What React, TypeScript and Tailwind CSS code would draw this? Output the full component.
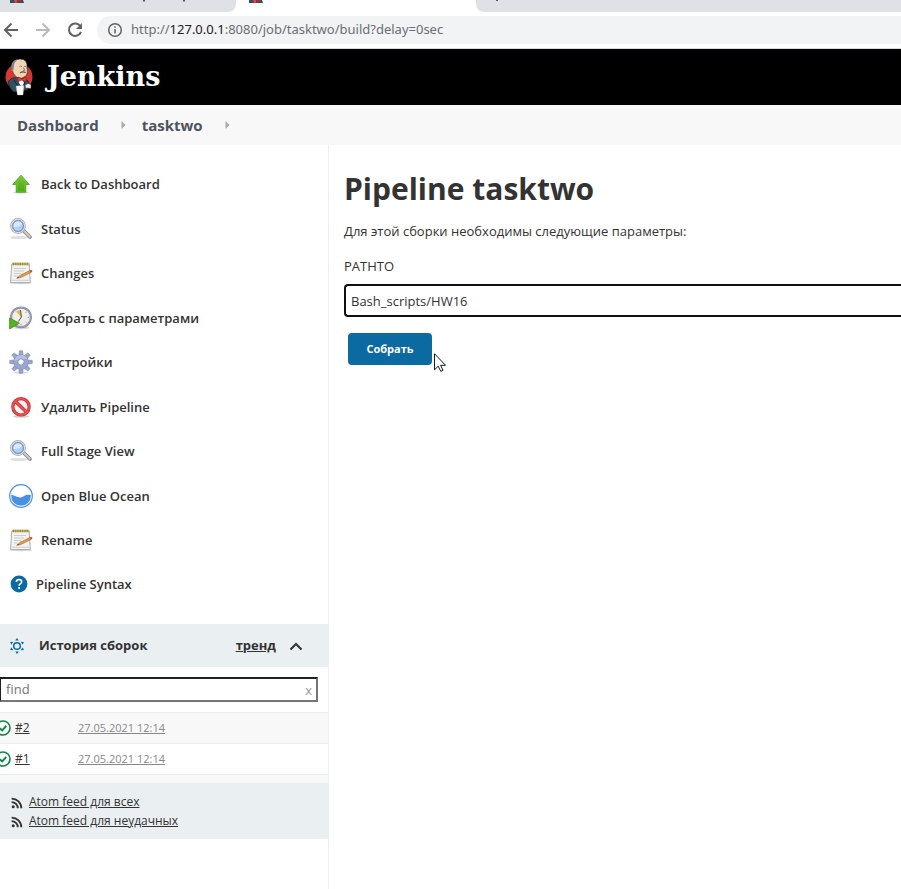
import type { ReactNode } from "react";

type IconProps = { className?: string };

function Butler({ className }: IconProps) {
  return (
    <svg viewBox="0 0 28 38" className={className} aria-hidden="true">
      <ellipse cx="14" cy="19" rx="13.5" ry="13.5" fill="#d33833" />
      <path d="M3 24 Q7 18.5 12 20 L20 21 Q24 22 24 27 L22 32 L9 34 Q5 32 3 24Z" fill="#335061" stroke="#172026" strokeWidth="0.8" />
      <path d="M7 11 Q6 1 15 1 Q23 1 22 10 Q23.5 16 20 18.5 Q17 21.5 12 19.5 Q7.5 16 7 11Z" fill="#f0d6b7" stroke="#231f20" strokeWidth="0.6" />
      <path d="M6.5 13 Q4.5 2.5 13 1.2 Q8.6 4.5 9 8.5 L8.2 13Z" fill="#8a8682" />
      <path d="M14.5 8.6 Q15.5 7.6 17 8.6 M19 8.6 Q20 7.8 21 8.8 M18.4 9.5 L19.8 12.4 L18 12.6" fill="none" stroke="#6b564a" strokeWidth="0.7" />
      <path d="M15 14.8 Q18 13 20.6 14.8" fill="none" stroke="#5c5048" strokeWidth="1.3" />
      <path d="M12.6 20.5 L17 21 L19 25 L17 29 L14 25Z" fill="#fff" />
      <path d="M13 19 L17 21 L21 19 L21 23.6 L17 22 L13 23.6Z" fill="#ef3d3a" stroke="#811c18" strokeWidth="0.6" />
      <path d="M9 22 L14 30 M20 24 L18 29" stroke="#172026" />
      <path d="M11 28 L19 27.5 L18 37 L12.4 37Z" fill="#fff" stroke="#999" strokeWidth="0.4" />
      <path d="M20 27 L23 25.6 L26 26.4 L26 30.6 L20.6 30Z" fill="#eee" stroke="#333" strokeWidth="0.5" />
    </svg>
  );
}

function UpArrow() {
  return (
    <svg viewBox="0 0 24 24" className="size-6">
      <defs>
        <linearGradient id="up" x1="0" y1="0" x2="0" y2="1">
          <stop offset="0" stopColor="#7acb32" />
          <stop offset="1" stopColor="#46a80c" />
        </linearGradient>
      </defs>
      <ellipse cx="12" cy="20.5" rx="8" ry="1.2" fill="#bbb" opacity="0.6" />
      <path d="M12 3.2 L20.3 12.5 H16.8 V20.2 H7.2 V12.5 H3.7Z" fill="url(#up)" stroke="#4a9c25" strokeWidth="0.8" />
      <path d="M12 4.8 L18 11.6 H15.8 V19.2 H8.2 V11.6 H6Z" fill="none" stroke="#8dd450" strokeWidth="0.4" />
    </svg>
  );
}

function Magnifier() {
  return (
    <svg viewBox="0 0 24 24" className="size-6">
      <ellipse cx="10" cy="20.5" rx="9" ry="1.6" fill="#ccc" opacity="0.6" />
      <path d="M14.5 13.5 L21 20" stroke="#888" strokeWidth="3.8" strokeLinecap="round" />
      <path d="M15 14 L20.8 19.8" stroke="#ccc" strokeWidth="2" strokeLinecap="round" />
      <circle cx="9" cy="9" r="7" fill="#a9c9ee" stroke="#aaa" strokeWidth="1.8" />
      <circle cx="9" cy="9" r="6.7" fill="none" stroke="#e6e6e6" strokeWidth="0.9" />
      <circle cx="9" cy="9" r="5.4" fill="#b4cff1" stroke="#668fc6" strokeWidth="1" />
      <path d="M4.8 10 Q4 4.5 9 4.5 Q12.5 4.5 13 7 Q10 10.5 4.8 10Z" fill="#e4effb" opacity="0.8" />
    </svg>
  );
}

function Notepad() {
  return (
    <svg viewBox="0 0 24 24" className="size-6">
      <ellipse cx="12" cy="22" rx="11" ry="1.2" fill="#bbb" opacity="0.6" />
      <path d="M2.8 3 H20.2 L21.3 21.6 H1.5Z" fill="#f2f2f2" stroke="#a5a5a5" strokeWidth="0.9" />
      <path d="M2.4 19.3 H20.6" stroke="#d0d0d0" />
      <rect x="3" y="1.8" width="17.4" height="2.4" fill="#c3b35a" />
      <path d="M4.5 1.5 V4.2 M6.8 1.5 V4.2 M9.1 1.5 V4.2 M11.4 1.5 V4.2 M13.7 1.5 V4.2 M16 1.5 V4.2 M18.3 1.5 V4.2" stroke="#8a7c35" strokeWidth="0.8" />
      <path d="M5 7.5 H17 M5 10 H15 M5 12.5 H12 M5 15 H9" stroke="#c4c4c4" strokeWidth="0.8" />
      <path d="M7.8 17.3 L11.4 14.2 L20.8 9.6 L22 11.4 L12.3 16.3Z" fill="#e0a04a" stroke="#93652c" strokeWidth="0.6" />
      <path d="M20.5 9.6 L22 9 Q23.8 9.3 23.1 10.9 L21.8 11.6Z" fill="#e03c3c" />
      <path d="M7.8 17.3 L9.4 15.9 L10.1 16.8Z" fill="#3c3022" />
    </svg>
  );
}

function ClockPlay() {
  return (
    <svg viewBox="0 0 24 24" className="size-6">
      <ellipse cx="12.5" cy="21.8" rx="8" ry="1.5" fill="#bbb" opacity="0.6" />
      <circle cx="12" cy="11.3" r="9.9" fill="#eeefea" stroke="#80809c" strokeWidth="2" />
      <circle cx="12" cy="11.3" r="9.9" fill="none" stroke="#b2b2cb" strokeWidth="0.7" />
      <path d="M12 11.3 L7 5.6 Q9.6 3.6 12 4Z" fill="#e5bd4f" />
      <path d="M11.5 4 L12.4 11 L9.4 15.5" fill="none" stroke="#555" strokeWidth="1" />
      <path d="M20 11.3 H18.4 M12 17.8 V19.4 M17.6 5.8 L16.6 6.8 M17.6 16.8 L16.6 15.9" stroke="#999" />
      <path d="M0.6 12 L10.4 17.2 L0.6 23Z" fill="#55b320" stroke="#3c8e10" strokeWidth="0.8" />
    </svg>
  );
}

const TEETH = [0, 45, 90, 135, 180, 225, 270, 315];

function Gear() {
  return (
    <svg viewBox="0 0 24 24" className="size-6">
      <ellipse cx="12" cy="22.5" rx="7" ry="1.2" fill="#bbb" opacity="0.6" />
      <g fill="#9aa6cc" stroke="#7482ab" strokeWidth="0.6">
        {TEETH.map((angle) => (
          <path key={angle} d="M9.9 6 L10.4 0.8 H13.6 L14.1 6Z" transform={`rotate(${angle} 12 12)`} />
        ))}
        <circle cx="12" cy="12" r="7.2" />
      </g>
      <circle cx="12" cy="12" r="6.9" fill="#9ba7ce" />
      <path d="M5.4 11 Q6 5.4 12 5.1 Q17 5.4 18.2 9 Q12 8 5.4 11Z" fill="#b7c0df" />
      <circle cx="12" cy="12" r="3.1" fill="#fff" stroke="#7482ab" strokeWidth="0.7" />
    </svg>
  );
}

function Forbidden() {
  return (
    <svg viewBox="0 0 24 24" className="size-6">
      <ellipse cx="12" cy="21.5" rx="8" ry="1.3" fill="#bbb" opacity="0.7" />
      <circle cx="12" cy="11.8" r="8.2" fill="#f6f2f2" stroke="#c92a2d" strokeWidth="3.2" />
      <path d="M6.2 6.2 L17.8 17.4" stroke="#c92a2d" strokeWidth="3.4" />
      <circle cx="12" cy="11.8" r="8.2" fill="none" stroke="#e75254" strokeWidth="1.8" />
      <path d="M6.2 6.2 L17.8 17.4" stroke="#e75254" strokeWidth="2" />
    </svg>
  );
}

function BlueOcean() {
  return (
    <svg viewBox="0 0 24 24" className="size-6">
      <circle cx="12" cy="12" r="11.3" fill="#fff" stroke="#4a90e2" strokeWidth="1.2" />
      <path d="M2.2 11 C5.5 10.4 7.5 13.6 11.5 13.4 C15.5 13 15.5 9.8 21.8 11 V12 A9.8 9.8 0 0 1 2.2 12Z" fill="#4a90e2" />
    </svg>
  );
}

function Help() {
  return (
    <svg viewBox="0 0 18 18" className="size-[18px]">
      <circle cx="9" cy="9" r="8.4" fill="#0b6aa2" />
      <path d="M6.3 7 Q6.5 4.5 9 4.5 Q11.7 4.6 11.7 6.8 Q11.6 8.3 10 9 Q9.1 9.5 9.1 10.7" fill="none" stroke="#fff" strokeWidth="1.6" />
      <circle cx="9.1" cy="13" r="1.1" fill="#fff" />
    </svg>
  );
}

const RAYS = [0, 60, 120, 180, 240, 300];

function Sun() {
  return (
    <svg viewBox="0 0 16 16" className="size-4">
      <circle cx="8" cy="8" r="3.3" fill="none" stroke="#0b6aa2" strokeWidth="1.5" />
      {RAYS.map((angle) => (
        <path key={angle} d="M8 0 L9.8 2.6 H6.2Z" fill="#0b6aa2" transform={`rotate(${angle} 8 8)`} />
      ))}
    </svg>
  );
}

function Success() {
  return (
    <svg viewBox="0 0 16 16" className="-ml-[5px] size-4 shrink-0">
      <circle cx="8" cy="8" r="7" fill="none" stroke="#138347" strokeWidth="1.6" />
      <path d="M4.8 8.2 L7.2 10.4 L11.2 6" fill="none" stroke="#138347" strokeWidth="1.9" />
    </svg>
  );
}

function Feed() {
  return (
    <svg viewBox="0 0 12 12" className="mt-0.5 size-3 shrink-0" fill="none" stroke="#333" strokeWidth="1.9">
      <path d="M0.6 1.6 A9.6 9.6 0 0 1 10.3 11.3 M0.6 5.1 A6.1 6.1 0 0 1 6.8 11.3" />
      <circle cx="2.2" cy="9.8" r="1.5" fill="#333" stroke="none" />
    </svg>
  );
}

function Favicon() {
  return (
    <svg viewBox="0 0 14 3" className="h-[3px] w-3.5" aria-hidden="true">
      <path d="M0 0 H13 L14 3 H0Z" fill="#335061" />
      <path d="M4 0 H7 V3 H5Z" fill="#ef3d3a" />
      <path d="M8 0 H11 V2 H8Z" fill="#b42c2a" />
    </svg>
  );
}

function BrowserChrome() {
  return (
    <header>
      <div className="flex h-3 overflow-hidden">
        <div className="flex w-[236px] shrink-0 rounded-br-lg bg-[#dee1e6] pl-2.5">
          <Favicon />
          <svg viewBox="0 0 48 2" className="ml-[118px] h-0.5 w-12" aria-hidden="true">
            <path d="M1 0 H3 V1.5 H1Z M41 0 H43 V1.5 H41Z" fill="#555" />
          </svg>
        </div>
        <div className="w-[240px] shrink-0 pl-[13px]">
          <Favicon />
        </div>
        <div className="flex-1 rounded-bl-lg bg-[#dee1e6] pl-5">
          <svg viewBox="0 0 4 2" className="h-0.5 w-1" aria-hidden="true">
            <path d="M0 0 H2 V1 H0Z" fill="#555" />
          </svg>
        </div>
      </div>
      <div className="flex h-[37px] items-center border-b border-[#d5d8dc] pl-[3px]">
        <button type="button" aria-label="Back">
          <svg viewBox="0 0 16 16" className="size-4" fill="none" stroke="#5f6368" strokeWidth="2">
            <path d="M15 8 H2.5 M8.5 1.5 L2 8 L8.5 14.5" />
          </svg>
        </button>
        <button type="button" aria-label="Forward" className="ml-4">
          <svg viewBox="0 0 16 16" className="size-4" fill="none" stroke="#b9bbbe" strokeWidth="2">
            <path d="M1 8 H13.5 M7.5 1.5 L14 8 L7.5 14.5" />
          </svg>
        </button>
        <button type="button" aria-label="Reload" className="ml-4">
          <svg viewBox="0 0 16 16" className="size-4" fill="none" stroke="#5f6368" strokeWidth="2">
            <path d="M13.4 4.3 A6.2 6.2 0 1 0 14 9.8" />
            <path d="M15 1 V7 H9Z" fill="#5f6368" stroke="none" />
          </svg>
        </button>
        <div className="ml-3.5 flex h-7 flex-1 items-center rounded-l-full bg-[#f1f3f4] pl-2.5 font-['Noto_Sans','Open_Sans',sans-serif] text-[13px] text-[#6b6f74]">
          <svg viewBox="0 0 16 16" className="mr-2 size-4" fill="none" stroke="#5f6368" strokeWidth="1.5">
            <circle cx="8" cy="8" r="6.3" />
            <path d="M8 7 V11.5 M8 4.3 V5.8" />
          </svg>
          <span>
            http://<span className="text-[#202124]">127.0.0.1</span>:8080/job/tasktwo/build?delay=0sec
          </span>
        </div>
      </div>
    </header>
  );
}

function CrumbArrow() {
  return (
    <svg viewBox="0 0 5 8" className="h-2 w-[5px]" aria-hidden="true">
      <path d="M0.5 0 L4.5 4 L0.5 8Z" fill="#aaa" />
    </svg>
  );
}

const TASKS: { label: string; icon: ReactNode }[] = [
  { label: "Back to Dashboard", icon: <UpArrow /> },
  { label: "Status", icon: <Magnifier /> },
  { label: "Changes", icon: <Notepad /> },
  { label: "Собрать с параметрами", icon: <ClockPlay /> },
  { label: "Настройки", icon: <Gear /> },
  { label: "Удалить Pipeline", icon: <Forbidden /> },
  { label: "Full Stage View", icon: <Magnifier /> },
  { label: "Open Blue Ocean", icon: <BlueOcean /> },
  { label: "Rename", icon: <Notepad /> },
];

const BUILDS = [
  { id: "#2", time: "27.05.2021 12:14", row: "bg-[#f8f8f8]" },
  { id: "#1", time: "27.05.2021 12:14", row: "bg-white" },
];

function Sidebar() {
  return (
    <aside className="w-[329px] shrink-0 border-r border-[#eaeff2]">
      <nav className="pt-[27px] text-[13px] leading-5 font-semibold text-[#333]">
        <ul className="flex h-[380px] flex-col justify-between pl-[9px]">
          {TASKS.map((task) => (
            <li key={task.label}>
              <a href="#" className="flex h-6 items-center gap-2">
                {task.icon}
                {task.label}
              </a>
            </li>
          ))}
        </ul>
        <a href="#" className="mt-5 flex h-6 items-center gap-2 pl-[10px]">
          <Help />
          Pipeline Syntax
        </a>
      </nav>

      <section className="mt-7">
        <div className="flex h-[43px] items-center bg-[#eaeff2] pr-6 pl-[9px] text-[13px] font-bold text-[#333]">
          <Sun />
          <h2 className="ml-3.5 flex-1">История сборок</h2>
          <a href="#" className="underline">
            тренд
          </a>
          <button type="button" aria-label="Свернуть" className="ml-3">
            <svg viewBox="0 0 16 16" className="size-4" fill="none" stroke="#333" strokeWidth="2">
              <path d="M2.5 11.5 L8 6 L13.5 11.5" />
            </svg>
          </button>
        </div>
        <div className="mt-2.5 mr-2.5 flex h-[25px] items-center border-2 border-l border-t-[#212121] border-r-[#767676] border-b-[#767676] border-l-[#212121] pr-1 pl-[5px] text-[13px]">
          <input type="text" aria-label="find" placeholder="find" className="min-w-0 flex-1 outline-none placeholder:text-[#757575]" />
          <button type="button" aria-label="Очистить" className="leading-4 text-[#999]">
            x
          </button>
        </div>
        <table className="mt-2.5 w-full border-collapse">
          <tbody>
            {BUILDS.map((build) => (
              <tr key={build.id} className={`h-[31px] border-y border-[#eaeff2] ${build.row}`}>
                <td className="w-[78px] p-0">
                  <div className="flex items-center gap-1 text-xs">
                    <Success />
                    <a href="#" className="text-[#333] underline">
                      {build.id}
                    </a>
                  </div>
                </td>
                <td className="p-0 text-[11px] leading-4">
                  <a href="#" className="text-[#888] underline">
                    {build.time}
                  </a>
                </td>
              </tr>
            ))}
          </tbody>
        </table>
        <div className="h-2 bg-[#f8f8f8]" />
        <div className="bg-[#eaeff2] py-[9px] pl-[11px] text-xs leading-[19px] text-[#333]">
          <a href="#" className="flex items-center gap-1.5 underline">
            <Feed />
            Atom feed для всех
          </a>
          <a href="#" className="flex items-center gap-1.5 underline">
            <Feed />
            Atom feed для неудачных
          </a>
        </div>
      </section>
    </aside>
  );
}

function BuildForm() {
  return (
    <main className="min-w-0 flex-1 pt-6 pl-[15px] text-[13px] leading-5 text-[#333]">
      <h1 className="text-[30px] leading-10 font-bold">Pipeline tasktwo</h1>
      <p className="mt-3">Для этой сборки необходимы следующие параметры:</p>
      <form onSubmit={(event) => event.preventDefault()}>
        <label htmlFor="pathto" className="mt-[15px] block font-medium">
          PATHTO
        </label>
        <input
          id="pathto"
          type="text"
          defaultValue="Bash_scripts/HW16"
          className="mt-2 block h-[33px] w-full rounded-l-sm border-2 border-r-0 border-[#101010] bg-white px-[5px] outline-none"
        />
        <div className="relative mt-4 ml-1 w-fit">
          <button type="submit" className="h-8 w-[84px] rounded-sm bg-[#0b6aa2] text-[11px] font-bold text-white">
            Собрать
          </button>
          <svg viewBox="0 0 12 19" className="absolute top-5 left-[86px] h-[19px] w-3" aria-hidden="true">
            <path d="M0.5 0.7 V16.8 L4.2 13.2 L6.8 18.4 L9 17.3 L6.6 12.3 H11.5Z" fill="#fff" stroke="#111827" />
          </svg>
        </div>
      </form>
    </main>
  );
}

export default function App() {
  return (
    <div className="flex min-h-screen flex-col overflow-x-hidden bg-white font-['Open_Sans','Noto_Sans',sans-serif]">
      <BrowserChrome />
      <div className="flex h-14 items-center bg-black pl-[5px]">
        <a href="#" className="flex items-center gap-3.5 text-white">
          <Butler className="h-[38px] w-7" />
          <span className="font-['DejaVu_Serif',serif] text-[27px] leading-8 font-bold">Jenkins</span>
        </a>
      </div>
      <nav className="flex h-10 items-center bg-[#f8f8f8] pl-[17px] text-[15px] font-bold text-[#4d545d]">
        <a href="#">Dashboard</a>
        <span className="mr-4 ml-[22px]">
          <CrumbArrow />
        </span>
        <a href="#">tasktwo</a>
        <span className="ml-[22px]">
          <CrumbArrow />
        </span>
      </nav>
      <div className="flex flex-1">
        <Sidebar />
        <BuildForm />
      </div>
    </div>
  );
}
